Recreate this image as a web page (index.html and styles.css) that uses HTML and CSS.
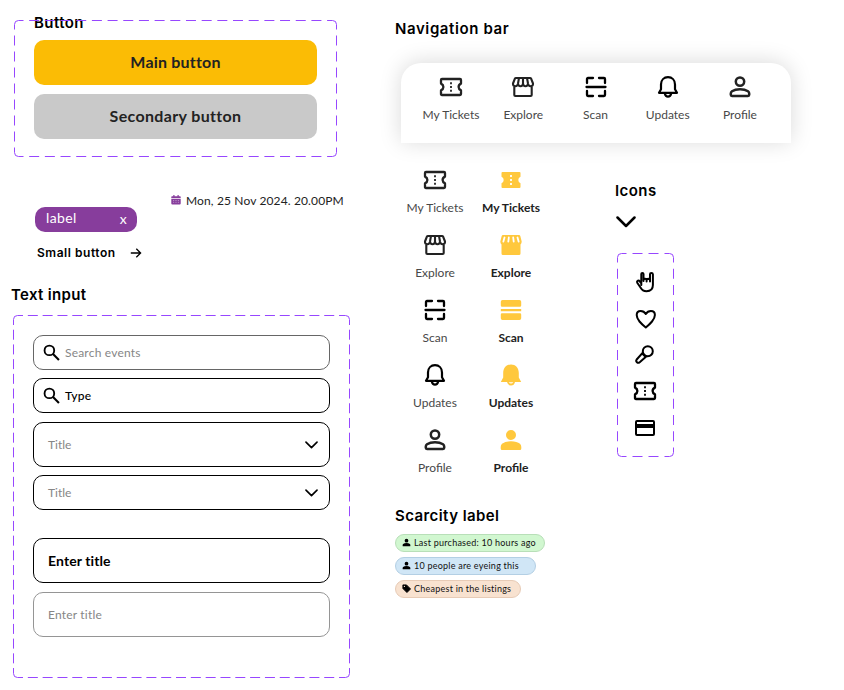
FILE: index.html
```
<!DOCTYPE html>
<html lang="en">
<head>
<meta charset="utf-8">
<title>Components</title>
<link rel="stylesheet" href="styles.css">
</head>
<body>
<svg class="defs" aria-hidden="true">
  <symbol id="ticket" viewBox="0 0 24 24"><path d="M3 4H21Q22 4 22 5V8.600Q19.600 9.800 19.600 12T22 15.400V19Q22 20 21 20H3Q2 20 2 19V15.400Q4.400 14.200 4.400 12T2 8.600V5Q2 4 3 4Z" fill="none" stroke="currentColor" stroke-width="2.300" stroke-linejoin="round"/><path d="M12 7.200v2M12 11v2M12 14.800v2" stroke="currentColor" stroke-width="1.800"/></symbol>
  <symbol id="ticket-fill" viewBox="0 0 24 24"><path d="M3.500 4H20.500Q21.500 4 21.500 5V8.800Q19.300 9.800 19.300 12T21.500 15.200V19Q21.500 20 20.500 20H3.500Q2.500 20 2.500 19V15.200Q4.700 14.200 4.700 12T2.500 8.800V5Q2.500 4 3.500 4Z" fill="currentColor"/><path d="M12 7v2M12 11v2M12 15v2" stroke="#fff" stroke-width="1.800"/></symbol>
  <symbol id="shop" viewBox="0 0 24 24"><path d="M3.300 11V20Q3.300 21 4.300 21H19.700Q20.700 21 20.700 20V11M5 3H19Q19.800 3 20.200 3.800L22 8.500Q22.200 11.200 19.700 11.200Q17.300 11.200 17 8.500Q16.800 11.200 14.500 11.200Q12.200 11.200 12 8.500Q11.800 11.200 9.500 11.200Q7.200 11.200 7 8.500Q6.700 11.200 4.300 11.200Q1.800 11.200 2 8.500L3.800 3.800Q4.200 3 5 3ZM7 8.500L8 3M12 8.500V3M17 8.500L16 3" fill="none" stroke="currentColor" stroke-width="2.100" stroke-linejoin="round"/></symbol>
  <symbol id="shop-fill" viewBox="0 0 24 24"><path d="M4 2H20Q21 2 21.300 3L22.700 8.500Q22.700 10.500 21.500 11.500V20.500Q21.500 22 20 22H4Q2.500 22 2.500 20.500V11.500Q1.300 10.500 1.300 8.500L2.700 3Q3 2 4 2Z" fill="currentColor"/><path d="M5.500 4.500L4.400 8.600M9.800 4.500L9.300 8.600M14.200 4.500L14.700 8.600M18.500 4.500L19.600 8.600" stroke="#fff" stroke-width="1.800" stroke-linecap="round"/></symbol>
  <symbol id="scan" viewBox="0 0 24 24"><path d="M3 8V4Q3 3 4 3H9M15 3H20Q21 3 21 4V8M3 16V20Q3 21 4 21H9M15 21H20Q21 21 21 20V16M2.500 12H21.500" fill="none" stroke="currentColor" stroke-width="2.300" stroke-linecap="round"/></symbol>
  <symbol id="scan-fill" viewBox="0 0 24 24"><path d="M3.500 2H20.500Q22.200 2 22.200 3.700V7.500Q22.200 8.800 21 8.800H3Q1.800 8.800 1.800 7.500V3.700Q1.800 2 3.500 2ZM1.800 11H22.200V13.200H1.800ZM3 15.200H21Q22.200 15.200 22.200 16.500V20.300Q22.200 22 20.500 22H3.500Q1.800 22 1.800 20.300V16.500Q1.800 15.200 3 15.200Z" fill="currentColor"/></symbol>
  <symbol id="bell" viewBox="0 0 24 24"><path d="M5 9.500C5 5 8 2.200 12 2.200S19 5 19 9.500V14.300L21 17.800H3L5 14.300ZM8.800 18.500Q9.500 21.700 12 21.700T15.200 18.500" fill="none" stroke="currentColor" stroke-width="2.200" stroke-linejoin="round"/></symbol>
  <symbol id="bell-fill" viewBox="0 0 24 24"><path d="M4.200 10C4.200 4.800 7.500 1.500 12 1.500S19.800 4.800 19.800 10V14.500L22.200 19H16Q15.200 22.500 12 22.500T8 19H1.800L4.200 14.500Z" fill="currentColor"/><path d="M9.700 19.200H14.300Q13.500 20.500 12 20.500T9.700 19.200Z" fill="#fff"/></symbol>
  <symbol id="user" viewBox="0 0 24 24"><path d="M16.200 6.600A4.200 4.200 0 1 1 7.800 6.600A4.200 4.200 0 1 1 16.200 6.600ZM12 14.300Q17 14.300 20 16.200Q21.200 17.100 21.200 18.500V19.700Q21.200 20.900 20 20.900H4Q2.800 20.900 2.800 19.700V18.500Q2.800 17.100 4 16.200Q7 14.300 12 14.300Z" fill="none" stroke="currentColor" stroke-width="2.500"/></symbol>
  <symbol id="user-fill" viewBox="0 0 24 24"><path d="M17 7A5 5 0 1 1 7 7A5 5 0 1 1 17 7ZM12 13.300Q18 13.300 21 15.800Q22.300 17 22.300 19V20.500Q22.300 22 21 22H3Q1.700 22 1.700 20.500V19Q1.700 17 3 15.800Q6 13.300 12 13.300Z" fill="currentColor"/></symbol>
  <symbol id="search" viewBox="0 0 24 24"><circle cx="9" cy="9" r="6.800" fill="none" stroke="currentColor" stroke-width="2.600"/><path d="M13.800 13.800L22.500 22.500" stroke="currentColor" stroke-width="2.900"/></symbol>
  <symbol id="chevron" viewBox="0 0 20 12"><path d="M1.500 1.500L10 10L18.500 1.500" fill="none" stroke="currentColor" stroke-width="2.500" stroke-linecap="round" stroke-linejoin="round"/></symbol>
</svg>

<main class="board">
  <div class="column column-left">
    <section class="frame frame-buttons">
      <svg class="outline" width="323" height="137"><g class="corners"><path d="M.5 4.500Q.5 .5 4.500 .5M318.500 .5Q322.500 .5 322.500 4.500M322.500 132.500Q322.500 136.500 318.500 136.500M4.500 136.500Q.5 136.500 .5 132.500"/></g><path stroke-dasharray="10 5.680" stroke-dashoffset="5" d="M4.500 .5H318.500M4.500 136.500H318.500"/><path stroke-dasharray="10 6" stroke-dashoffset="5" d="M.5 4.500V132.500M322.500 4.500V132.500"/></svg>
      <h2 class="heading frame-title">Button</h2>
      <button class="button primary">Main button</button>
      <button class="button secondary">Secondary button</button>
    </section>

    <div class="meta">
      <span class="tag"><span>label</span><span class="tag-close">x</span></span>
      <span class="date"><svg width="10" height="10" viewBox="0 0 10 10"><path d="M1 1.200H9Q9.700 1.200 9.700 2V3.200H.3V2Q.3 1.200 1 1.200ZM.3 4H9.700V8.500Q9.700 9.500 8.700 9.500H1.300Q.3 9.500 .3 8.500ZM2.300 0H3.500V2H2.300ZM6.500 0H7.700V2H6.500Z" fill="#873d9c"/><path d="M2 5.500H8M2 7.300H8" stroke="#c39dce" stroke-width=".8" stroke-dasharray="1.200 1.200"/></svg><span>Mon, 25 Nov 2024. 20.00PM</span></span>
    </div>
    <a class="small-button"><span>Small button</span><svg width="12" height="12" viewBox="0 0 12 12"><path d="M.8 6H10.500M6.300 1.700L10.600 6L6.300 10.300" fill="none" stroke="#000" stroke-width="1.300"/></svg></a>

    <h2 class="heading h-input">Text input</h2>
    <section class="frame frame-inputs">
      <svg class="outline" width="337" height="363"><g class="corners"><path d="M.5 4.500Q.5 .5 4.500 .5M332.500 .5Q336.500 .5 336.500 4.500M336.500 358.500Q336.500 362.500 332.500 362.500M4.500 362.500Q.5 362.500 .5 358.500"/></g><path stroke-dasharray="10 4.820" stroke-dashoffset="4.500" d="M4.500 .5H332.500M4.500 362.500H332.500"/><path stroke-dasharray="10 4.710" stroke-dashoffset="4.500" d="M.5 4.500V358.500M336.500 4.500V358.500"/></svg>
      <div class="field search idle"><svg class="glass"><use href="#search"/></svg><span class="ph">Search events</span></div>
      <div class="field search"><svg class="glass"><use href="#search"/></svg><span class="typed">Type</span></div>
      <div class="field tall select"><span class="ph">Title</span><svg class="caret"><use href="#chevron"/></svg></div>
      <div class="field select"><span class="ph">Title</span><svg class="caret"><use href="#chevron"/></svg></div>
      <div class="field tall filled"><span>Enter title</span></div>
      <div class="field tall empty"><span class="ph">Enter title</span></div>
    </section>
  </div>

  <div class="column column-right">
    <h2 class="heading h-nav">Navigation bar</h2>
    <nav class="navbar">
      <a class="item"><svg class="icon"><use href="#ticket"/></svg><span>My Tickets</span></a>
      <a class="item"><svg class="icon"><use href="#shop"/></svg><span>Explore</span></a>
      <a class="item dark"><svg class="icon"><use href="#scan"/></svg><span>Scan</span></a>
      <a class="item dark"><svg class="icon"><use href="#bell"/></svg><span>Updates</span></a>
      <a class="item"><svg class="icon"><use href="#user"/></svg><span>Profile</span></a>
    </nav>
    <div class="middle">
      <div class="states">
        <a class="item"><svg class="icon"><use href="#ticket"/></svg><span>My Tickets</span></a>
        <a class="item active"><svg class="icon"><use href="#ticket-fill"/></svg><span>My Tickets</span></a>
        <a class="item"><svg class="icon"><use href="#shop"/></svg><span>Explore</span></a>
        <a class="item active"><svg class="icon"><use href="#shop-fill"/></svg><span>Explore</span></a>
        <a class="item dark"><svg class="icon"><use href="#scan"/></svg><span>Scan</span></a>
        <a class="item active"><svg class="icon"><use href="#scan-fill"/></svg><span>Scan</span></a>
        <a class="item dark"><svg class="icon"><use href="#bell"/></svg><span>Updates</span></a>
        <a class="item active"><svg class="icon"><use href="#bell-fill"/></svg><span>Updates</span></a>
        <a class="item"><svg class="icon"><use href="#user"/></svg><span>Profile</span></a>
        <a class="item active"><svg class="icon"><use href="#user-fill"/></svg><span>Profile</span></a>
      </div>
      <section class="icons">
        <h2 class="heading h-icons">Icons</h2>
        <svg class="chevron"><use href="#chevron"/></svg>
        <div class="frame frame-icons">
          <svg class="outline" width="57" height="205"><g class="corners"><path d="M.5 4.500Q.5 .5 4.500 .5M52.500 .5Q56.500 .5 56.500 4.500M56.500 199.500Q56.500 203.500 52.500 203.500M4.500 203.500Q.5 203.500 .5 199.500"/></g><path stroke-dasharray="10 6" stroke-dashoffset="5" d="M4.500 .5H52.500M4.500 203.500H52.500"/><path stroke-dasharray="10 6.250" stroke-dashoffset="5" d="M.5 4.500V199.500M56.500 4.500V199.500"/></svg>
          <svg class="icon" viewBox="0 0 24 24"><path d="M8.300 15V4Q8.300 2.900 9.400 2.900T10.500 4V11M10.500 11V9.500Q12 8 13.600 9.500V11.500M13.600 11V9.600Q15.300 8.200 17 9.600V11.500M17 11.500V4.300Q17 2.900 18.400 2.900T19.900 4.300V15Q19.900 21.200 13.500 21.200Q9.500 21.200 7.500 17.500L4.400 13Q3.500 11.300 4.900 10.700Q6 10.300 6.800 11.500L8.300 13.500" fill="none" stroke="currentColor" stroke-width="2" stroke-linejoin="round" stroke-linecap="round"/></svg>
          <svg class="icon" viewBox="0 0 24 24"><path d="M12.800 20.500Q9 17.500 6.500 14.500Q3.700 11 3.700 8Q3.700 4 7.700 4Q11 4 12.800 7Q14.600 4 17.900 4Q21.900 4 21.900 8Q21.900 11 19 14.500Q16.500 17.500 12.800 20.500Z" fill="none" stroke="currentColor" stroke-width="2" stroke-linejoin="round"/></svg>
          <svg class="icon" viewBox="0 0 24 24"><path d="M19.800 8.200A5 5 0 1 1 9.800 8.200A5 5 0 1 1 19.800 8.200ZM10 9.300L3.700 16.500Q2.600 18 3.900 19.200T6.700 19.200L13.500 13.300M9.200 10.500L13 14.300" fill="none" stroke="currentColor" stroke-width="2" stroke-linejoin="round"/></svg>
          <svg class="icon" viewBox="0 1 24 24"><use href="#ticket" width="24" height="24"/></svg>
          <svg class="icon" viewBox="0 0 24 24"><rect x="3" y="5" width="18" height="14" rx="1" fill="none" stroke="currentColor" stroke-width="2"/><path d="M3 10H21" stroke="currentColor" stroke-width="4"/></svg>
        </div>
      </section>
    </div>

    <h2 class="heading h-scarcity">Scarcity label</h2>
    <div class="chips">
      <span class="chip green"><svg class="mini"><use href="#user-fill"/></svg><span>Last purchased: 10 hours ago</span></span>
      <span class="chip blue"><svg class="mini"><use href="#user-fill"/></svg><span>10 people are eyeing this</span></span>
      <span class="chip peach"><svg class="mini" viewBox="0 0 10 10"><path d="M1 1H5L9.500 5.500L5.500 9.500L1 5Z" fill="#000" stroke="#000" stroke-linejoin="round"/><circle cx="2.700" cy="2.700" r=".7" fill="#f8e2d0"/></svg><span>Cheapest in the listings</span></span>
    </div>
  </div>
</main>
</body>
</html>
```
FILE: styles.css
```
* { box-sizing: border-box; }
body { margin: 0; background: #fff; color: #000; font-family: Lato, "Liberation Sans", sans-serif; }
svg { display: block; flex: none; }
.defs { display: none; }
.board { display: grid; grid-template-columns: 395px 1fr; height: 690px; overflow: hidden; }
.column { display: flex; flex-direction: column; align-items: flex-start; }
.heading { margin: 0; font: 600 15px/24px Inter, sans-serif; letter-spacing: .43px; white-space: nowrap; }
span { white-space: nowrap; }

.frame { position: relative; display: flex; flex-direction: column; }
.outline { position: absolute; left: 0; top: 0; fill: none; stroke: #9747ff; stroke-width: 1; }
.frame-buttons { width: 323px; height: 137px; margin: 20px 0 0 14px; padding: 20px; gap: 9px; }
.frame-title { position: absolute; left: 20px; top: -9px; z-index: -1; }
.button { height: 45px; flex: none; border: 0; border-radius: 10px; padding: 0 0 2px; color: #222; font: 700 16px/43px Lato, sans-serif; letter-spacing: .2px; }
.primary { background: #fbbc05; }
.secondary { background: #c9c9c9; letter-spacing: .35px; }

.meta { display: flex; align-items: flex-end; margin: 34px 0 0 35px; height: 41px; }
.tag { display: flex; justify-content: space-between; width: 102px; height: 25px; padding: 0 10px 0 11px; border-radius: 10px; background: #873d9c; color: #fff; font-size: 14px; line-height: 22px; letter-spacing: .4px; }
.tag-close { line-height: 23px; }
.date { display: flex; align-items: center; align-self: flex-start; gap: 5px; margin-left: 34px; height: 18px; font-size: 12px; color: #222; letter-spacing: .13px; }
.small-button { display: flex; align-items: center; gap: 14px; height: 20px; margin: 11px 0 0 37px; font: 600 12px/20px Inter, sans-serif; letter-spacing: .53px; }
.h-input { margin: 20px 0 0 11px; letter-spacing: .33px; }

.frame-inputs { width: 337px; height: 363px; margin: 8px 0 0 13px; padding: 20px; }
.field { display: flex; align-items: center; flex: none; height: 35px; border: 1px solid #000; border-radius: 10px; padding: 0 11px 0 14px; font-size: 12px; margin-bottom: 8px; }
.tall { height: 45px; }
.search { padding-left: 9px; gap: 5px; }
.search + .tall { margin-top: 1px; }
.idle { border-color: #666; }
.glass { width: 17px; height: 17px; }
.ph { color: #868686; letter-spacing: .2px; }
.select .ph { letter-spacing: 0; }
.typed { font-weight: 500; letter-spacing: .2px; }
.select { justify-content: space-between; }
.caret { width: 13px; height: 8px; }
.filled { margin: 20px 0 9px; font-size: 14px; font-weight: 700; letter-spacing: .1px; }
.empty { border-color: #959595; }

.h-nav { margin-top: 17px; letter-spacing: .6px; }
.navbar { display: flex; justify-content: space-between; width: 390px; height: 80px; margin: 22px 0 0 6px; padding: 12px 15px 0 14px; border-radius: 20px 20px 0 0; background: #fff; box-shadow: 0 -1px 22px rgba(0,0,0,.15); }
.item { display: flex; flex-direction: column; align-items: center; gap: 6px; width: 72px; color: #222; font-size: 12px; line-height: 20px; }
.item span { color: #484848; }
.icon { width: 24px; height: 24px; }
.dark .icon { color: #000; }
.item.active span { font-weight: 700; color: #222; }
.active .icon { color: #ffc83d; }
.middle { display: flex; height: 336px; }
.states { display: grid; grid-template-columns: 72px 72px; column-gap: 4px; grid-auto-rows: 65px; width: 156px; margin: 25px 0 0 4px; }
.icons { margin: 36px 0 0 60px; }
.chevron { width: 20px; height: 12px; margin: 13px 0 0 .5px; }
.frame-icons { width: 57px; height: 204px; margin: 25px 0 0 2px; padding: 17px 0 0 16px; gap: 12.5px; }
.h-scarcity { margin-top: 25px; }
.chips { display: flex; flex-direction: column; align-items: flex-start; gap: 5px; margin-top: 6px; }
.chip { display: flex; align-items: center; gap: 3px; height: 18px; padding: 0 6px 1px; border: 1px solid; border-radius: 10px; font-size: 9px; letter-spacing: .24px; color: #111; }
.mini { width: 9px; height: 9px; color: #000; }
.green { width: 150px; background: #d1f7d0; border-color: #b8dfb8; }
.blue { width: 141px; background: #d0e6f6; border-color: #b3cfe4; }
.peach { width: 126px; background: #f8e2d0; border-color: #e7cbb6; }
```
